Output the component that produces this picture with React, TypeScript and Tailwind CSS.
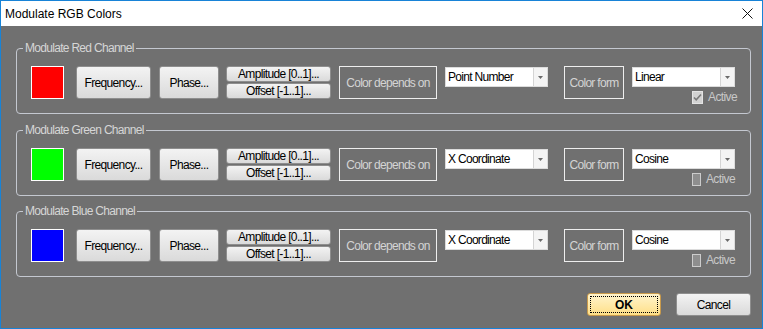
import React from "react";

type Channel = {
  name: string;
  swatch: string;
  dependsOn: string;
  form: string;
  active: boolean;
};

const CHANNELS: Channel[] = [
  { name: "Red", swatch: "bg-[#ff0000]", dependsOn: "Point Number", form: "Linear", active: true },
  { name: "Green", swatch: "bg-[#00ff00]", dependsOn: "X Coordinate", form: "Cosine", active: false },
  { name: "Blue", swatch: "bg-[#0000ff]", dependsOn: "X Coordinate", form: "Cosine", active: false },
];

const btn =
  "flex items-center justify-center rounded-[3px] border border-[#8e8e8e] bg-gradient-to-b from-[#f3f3f3] to-[#dadada] text-[12px] tracking-[-0.65px] text-black";

function Combo({ value }: { value: string }) {
  return (
    <div className="mt-px flex h-[20px] w-[103px] border border-[#dcdcdc] bg-white">
      <span className="flex-1 pl-[2px] text-[12px] leading-[18px] tracking-[-0.7px] text-black">{value}</span>
      <span className="flex w-[14px] items-center justify-center border-l border-[#d4d4d4] bg-[#f4f4f4]">
        <svg width="5" height="3" viewBox="0 0 5 3">
          <path d="M0 0h5L2.5 3z" fill="#6a6a6a" />
        </svg>
      </span>
    </div>
  );
}

function LabelBox({ text, w }: { text: string; w: string }) {
  return (
    <div
      className={`flex h-[33px] ${w} items-center justify-center border border-[#eeeeee] text-[12px] tracking-[-0.7px] text-[#d4d4d4]`}
    >
      {text}
    </div>
  );
}

function CheckBox({ checked }: { checked: boolean }) {
  return (
    <span
      className={`flex h-[13px] w-[13px] items-center justify-center border ${
        checked ? "border-[#e4e4e4] bg-[#d2d2d2]" : "border-[#cccccc] bg-[#8e8e8e]"
      }`}
    >
      {checked && (
        <svg width="9" height="9" viewBox="0 0 9 9">
          <path d="M1 4.5l2.2 2.4L8 1.5" stroke="#7a7a7a" strokeWidth="1.6" fill="none" />
        </svg>
      )}
    </span>
  );
}

function ChannelGroup({ ch }: { ch: Channel }) {
  return (
    <fieldset className="w-[735px] rounded-[4px] border border-[#c4c8d0] p-0">
      <legend className="ml-[6px] px-[2px] text-[12px] leading-[13px] tracking-[-0.7px] text-[#d6d6d6]">
        Modulate {ch.name} Channel
      </legend>
      <div className="flex h-[33px] items-start pl-[14px] mt-[11px] mb-[14px]">
        <div className={`h-[33px] w-[33px] border border-white ${ch.swatch}`} />
        <button className={`ml-[12px] h-[33px] w-[75px] ${btn}`}>Frequency...</button>
        <button className={`ml-[8px] h-[33px] w-[60px] ${btn}`}>Phase...</button>
        <div className="ml-[7px] flex w-[105px] flex-col gap-px">
          <button className={`h-[16px] ${btn}`}>Amplitude [0..1]...</button>
          <button className={`h-[16px] ${btn}`}>Offset [-1..1]...</button>
        </div>
        <div className="ml-[8px]">
          <LabelBox text="Color depends on" w="w-[98px]" />
        </div>
        <div className="ml-[8px]">
          <Combo value={ch.dependsOn} />
        </div>
        <div className="ml-[16px]">
          <LabelBox text="Color form" w="w-[60px]" />
        </div>
        <div className="ml-[8px] flex w-[103px] flex-col">
          <Combo value={ch.form} />
          <div className="ml-[60px] mt-[4px] flex items-center gap-[5px] whitespace-nowrap">
            <CheckBox checked={ch.active} />
            <span className="text-[12px] leading-[13px] tracking-[-0.6px] text-[#c8c8c8]">Active</span>
          </div>
        </div>
      </div>
    </fieldset>
  );
}

export default function App() {
  return (
    <div className="flex h-[329px] w-[763px] flex-col border border-[#1883d7] font-['Liberation_Sans',Arial,sans-serif]">
      <div className="flex h-[25px] items-center justify-between bg-white pl-[4px] pr-[9px]">
        <span className="text-[12px] text-black">Modulate RGB Colors</span>
        <svg width="11" height="11" viewBox="0 0 11 11">
          <path d="M0.5 0.5l10 10M10.5 0.5l-10 10" stroke="#111" strokeWidth="1" />
        </svg>
      </div>
      <div className="flex flex-1 flex-col bg-[#707070] pl-[15px]">
        <div className="mt-[16px]">
          <ChannelGroup ch={CHANNELS[0]} />
        </div>
        <div className="mt-[10px]">
          <ChannelGroup ch={CHANNELS[1]} />
        </div>
        <div className="mt-[9px]">
          <ChannelGroup ch={CHANNELS[2]} />
        </div>
        <div className="mt-[16px] flex w-[735px] justify-end gap-[15px]">
          <button className="h-[23px] w-[74px] rounded-[3px] border border-[#c99a4c] bg-gradient-to-b from-[#fff4cc] to-[#ffdf85] p-[2px]">
            <span className="flex h-full w-full items-center justify-center border border-dotted border-black text-[12px] font-bold text-black">
              OK
            </span>
          </button>
          <button className={`h-[23px] w-[75px] ${btn}`}>Cancel</button>
        </div>
      </div>
    </div>
  );
}
